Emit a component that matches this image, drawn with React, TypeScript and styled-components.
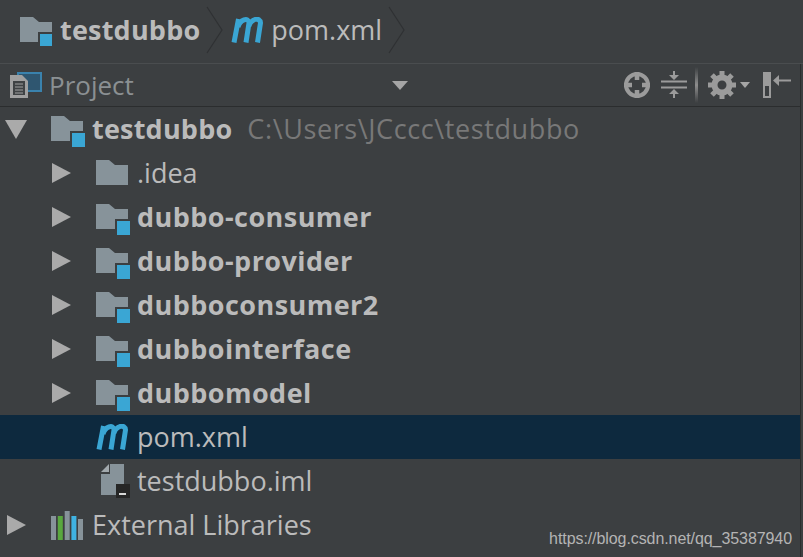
import styled, { createGlobalStyle } from 'styled-components';

const BLUE = '#3aa6d4';
const GREY = '#87939a';

const GlobalStyle = createGlobalStyle`
  html, body {
    margin: 0;
    padding: 0;
    background: #3c3f41;
  }
`;

const FolderSvg = styled.svg`
  flex: none;
  margin-top: 5px;
`;

const FolderIcon = ({ module, small }: { module?: boolean; small?: boolean }) => (
  <FolderSvg width="34" height="32" viewBox="0 0 34 32">
    <path d="M0 0h13l6 5h13v20H0z" fill={GREY} />
    {module && !small && <rect x="19" y="15" width="15" height="16" fill="#3c3f41" />}
    {module && !small && <rect x="21" y="17" width="13" height="14" fill={BLUE} />}
    {small && <rect x="18" y="15" width="14" height="14" fill="#3c3f41" />}
    {small && <rect x="20" y="17" width="12" height="12" fill={BLUE} />}
  </FolderSvg>
);

const MavenIcon = () => (
  <svg width="34" height="26" viewBox="0 0 34 26">
    <path
      d="M3 25.5 L7.5 2 M7 10 C9 3 17.5 -0.5 18 6 L15 25.5 M18 9 C20 2 29 -0.5 29.5 6 L26.5 25.5"
      fill="none"
      stroke={BLUE}
      strokeWidth="5"
    />
  </svg>
);

const ImlSvg = styled.svg`
  margin-left: 5px;
`;

const ImlIcon = () => (
  <ImlSvg width="30" height="34" viewBox="0 0 30 34">
    <path d="M9 0h14v31H0V10h9z" fill={GREY} />
    <path d="M0 8L8 0v8z" fill="#a2a9ad" />
    <rect x="15" y="20" width="14" height="14" fill="#262626" />
    <rect x="18" y="29" width="7" height="2" fill="#d8d8d8" />
  </ImlSvg>
);

const LibrariesIcon = () => (
  <svg width="34" height="29" viewBox="0 0 34 29">
    <rect x="0" y="5" width="5" height="24" fill={GREY} />
    <rect x="6.8" y="5" width="5" height="24" fill="#59a83e" />
    <rect x="13.7" y="0" width="5" height="29" fill={GREY} />
    <rect x="20.4" y="5" width="5" height="24" fill="#3fb2e2" />
    <rect x="27" y="8" width="5" height="21" fill={GREY} />
  </svg>
);

const ProjectIcon = () => (
  <svg width="32" height="26" viewBox="0 0 32 26">
    <rect x="8" y="1" width="23" height="18" fill="#2f5670" stroke="#3a82ad" strokeWidth="2" />
    <path d="M0 3h12l6 6v17H0z" fill="#a0a0a0" />
    <rect x="3" y="9" width="12" height="14" fill="#3f4244" />
    <path d="M5 12h8M5 15h8M5 18h8M5 21h8" stroke="#a0a0a0" strokeWidth="1.2" />
  </svg>
);

const LocateIcon = () => (
  <svg width="28" height="28" viewBox="0 0 28 28">
    <circle cx="14" cy="14" r="11" fill="none" stroke="#9b9b9b" strokeWidth="4" />
    <path d="M14 1v8M14 19v8M1 14h8M19 14h8" stroke="#9b9b9b" strokeWidth="4.5" />
  </svg>
);

const CollapseIcon = () => (
  <svg width="26" height="28" viewBox="0 0 26 28">
    <path d="M0 10.5h26M0 16.5h26" stroke="#9b9b9b" strokeWidth="2" />
    <path d="M12 0h2v4h4l-5 5-5-5h4zM12 27h2v-4h4l-5-5-5 5h4z" fill="#9b9b9b" />
  </svg>
);

const GearIcon = () => (
  <svg width="28" height="28" viewBox="0 0 28 28">
    <circle cx="14" cy="14" r="7.5" fill="none" stroke="#9b9b9b" strokeWidth="6" />
    <path
      d="M14 0v6M14 22v6M0 14h6M22 14h6M4 4l4 4M20 20l4 4M24 4l-4 4M8 20l-4 4"
      stroke="#9b9b9b"
      strokeWidth="5"
    />
  </svg>
);

const HideIcon = () => (
  <svg width="28" height="26" viewBox="0 0 28 26">
    <rect x="1" y="1" width="6" height="24" fill="#3c3f41" stroke="#9b9b9b" strokeWidth="2" />
    <rect x="1" y="1" width="6" height="13" fill="#9b9b9b" />
    <path d="M28 8.5H13" stroke="#9b9b9b" strokeWidth="2" />
    <path d="M10 8.5l6-5.5v11z" fill="#9b9b9b" />
  </svg>
);

const Crumb = () => (
  <svg width="20" height="48" viewBox="0 0 20 48">
    <path d="M1 1l15 23L1 47" fill="none" stroke="#2f3133" strokeWidth="1.2" />
  </svg>
);

const Page = styled.div`
  position: relative;
  width: 803px;
  height: 557px;
  overflow: hidden;
  background: #3c3f41;
  font-family: 'Open Sans', 'Noto Sans', sans-serif;
  font-size: 27px;
  color: #bbbbbb;
`;

const Breadcrumbs = styled.nav`
  display: flex;
  align-items: center;
  height: 64px;
  padding: 0 0 3px 20px;
  border-bottom: 1px solid #4a4d4f;
  box-sizing: border-box;
`;

const CrumbName = styled.span<{ $bold?: boolean }>`
  margin: -2px 6px 0;
  font-weight: ${(p) => (p.$bold ? 700 : 400)};
  letter-spacing: ${(p) => (p.$bold ? '0.2px' : '0')};
`;

const CrumbGroup = styled.div`
  display: flex;
  align-items: center;
  height: 100%;
  margin-right: 5px;
`;

const Panel = styled.section`
  width: 801px;
  height: 493px;
  border-right: 1px solid #2b2d2e;
  box-sizing: border-box;
`;

const Header = styled.header`
  display: flex;
  align-items: center;
  height: 43px;
  padding: 0 9px 0 10px;
  border-bottom: 1px solid #2b2d2e;
  box-sizing: border-box;
`;

const HeaderTitle = styled.span`
  flex: 1;
  margin-left: 7px;
  font-size: 26px;
  color: #8b9093;
`;

const DropArrow = styled.span<{ $size: number }>`
  width: 0;
  height: 0;
  border-left: ${(p) => p.$size}px solid transparent;
  border-right: ${(p) => p.$size}px solid transparent;
  border-top: ${(p) => p.$size + 1}px solid #a5a5a5;
`;

const ComboSlot = styled.div`
  display: flex;
  margin-right: 215px;
`;

const Tools = styled.div`
  display: flex;
  align-items: center;
  gap: 10px;
`;

const ToolDivider = styled.span`
  width: 3px;
  height: 36px;
  margin-left: -2px;
  background: linear-gradient(#3c3f41, #8d8d8d 50%, #3c3f41);
`;

const GearGroup = styled.div`
  display: flex;
  align-items: center;
  gap: 4px;
  margin-right: 3px;
`;

const Tree = styled.ul`
  list-style: none;
  margin: 0;
  padding: 0;
`;

const Row = styled.li<{ $depth: number; $selected?: boolean }>`
  display: flex;
  align-items: center;
  height: 44px;
  padding-left: ${(p) => 5 + p.$depth * 45}px;
  background: ${(p) => (p.$selected ? '#0d293e' : 'transparent')};
`;

const Twist = styled.span`
  display: flex;
  justify-content: flex-start;
  align-items: center;
  flex: none;
  width: 46px;
`;

const ArrowRight = styled.span`
  width: 0;
  height: 0;
  margin-left: 2px;
  border-top: 10px solid transparent;
  border-bottom: 10px solid transparent;
  border-left: 19px solid #aaaaaa;
`;

const ArrowDown = styled.span`
  width: 0;
  height: 0;
  border-left: 11px solid transparent;
  border-right: 11px solid transparent;
  border-top: 19px solid #aaaaaa;
`;

const IconSlot = styled.span`
  display: flex;
  flex: none;
  justify-content: flex-start;
  align-items: center;
  width: 41px;
`;

const Name = styled.span<{ $bold?: boolean; $tight?: boolean }>`
  margin-top: -2px;
  font-weight: ${(p) => (p.$bold ? 700 : 400)};
  letter-spacing: ${(p) => (p.$tight ? '0.2px' : p.$bold ? '0.45px' : '0')};
  white-space: nowrap;
`;

const PathHint = styled.span`
  margin: -2px 0 0 15px;
  letter-spacing: 0.6px;
  color: #787878;
  white-space: nowrap;
`;

const Watermark = styled.span`
  position: absolute;
  right: 11px;
  bottom: 9px;
  font-family: 'Liberation Sans', Arial, sans-serif;
  font-size: 16px;
  letter-spacing: -0.08px;
  color: #b4b4b4;
`;

const modules = ['dubbo-consumer', 'dubbo-provider', 'dubboconsumer2', 'dubbointerface', 'dubbomodel'];

export default function App() {
  return (
    <Page>
      <GlobalStyle />
      <Breadcrumbs>
        <CrumbGroup>
          <FolderIcon module small />
          <CrumbName $bold>testdubbo</CrumbName>
          <Crumb />
        </CrumbGroup>
        <CrumbGroup>
          <MavenIcon />
          <CrumbName>pom.xml</CrumbName>
          <Crumb />
        </CrumbGroup>
      </Breadcrumbs>
      <Panel>
        <Header>
          <ProjectIcon />
          <HeaderTitle>Project</HeaderTitle>
          <ComboSlot>
            <DropArrow $size={8} />
          </ComboSlot>
          <Tools>
            <LocateIcon />
            <CollapseIcon />
            <ToolDivider />
            <GearGroup>
              <GearIcon />
              <DropArrow $size={5} />
            </GearGroup>
            <HideIcon />
          </Tools>
        </Header>
        <Tree>
          <Row $depth={0}>
            <Twist>
              <ArrowDown />
            </Twist>
            <IconSlot>
              <FolderIcon module />
            </IconSlot>
            <Name $bold $tight>testdubbo</Name>
            <PathHint>C:\Users\JCccc\testdubbo</PathHint>
          </Row>
          <Row $depth={1}>
            <Twist>
              <ArrowRight />
            </Twist>
            <IconSlot>
              <FolderIcon />
            </IconSlot>
            <Name>.idea</Name>
          </Row>
          {modules.map((name) => (
            <Row $depth={1} key={name}>
              <Twist>
                <ArrowRight />
              </Twist>
              <IconSlot>
                <FolderIcon module />
              </IconSlot>
              <Name $bold>{name}</Name>
            </Row>
          ))}
          <Row $depth={1} $selected>
            <Twist />
            <IconSlot>
              <MavenIcon />
            </IconSlot>
            <Name>pom.xml</Name>
          </Row>
          <Row $depth={1}>
            <Twist />
            <IconSlot>
              <ImlIcon />
            </IconSlot>
            <Name>testdubbo.iml</Name>
          </Row>
          <Row $depth={0}>
            <Twist>
              <ArrowRight />
            </Twist>
            <IconSlot>
              <LibrariesIcon />
            </IconSlot>
            <Name>External Libraries</Name>
          </Row>
        </Tree>
      </Panel>
      <Watermark>https://blog.csdn.net/qq_35387940</Watermark>
    </Page>
  );
}
